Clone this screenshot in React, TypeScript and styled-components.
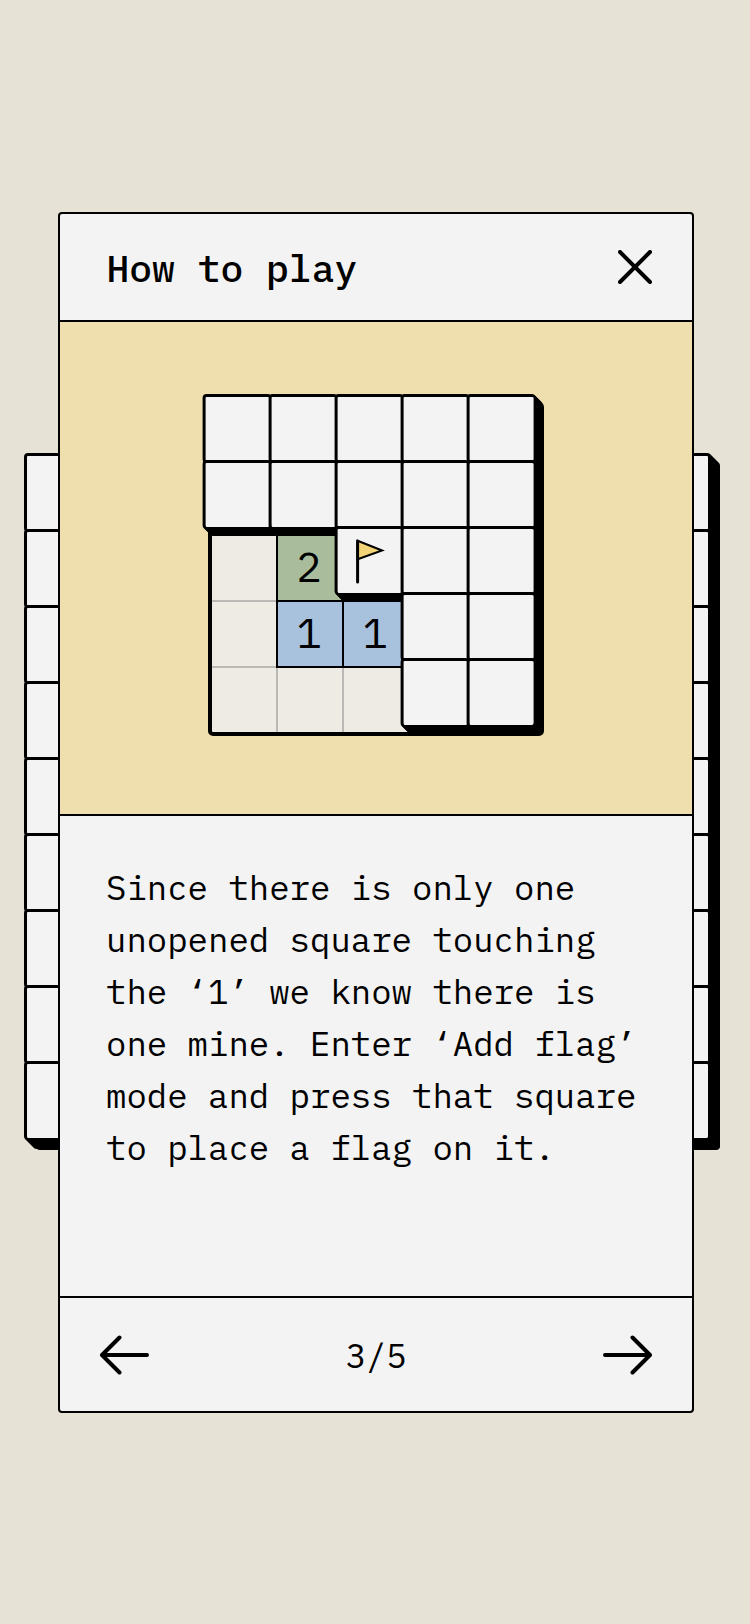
import React from "react";
import styled, { createGlobalStyle, css } from "styled-components";

const INK = "#000";
const PAPER = "#f3f3f3";

const extrude = (depth: number) =>
  Array.from({ length: depth }, (_, i) => `${i + 1}px ${i + 1}px 0 ${INK}`).join(", ");

const GlobalStyle = createGlobalStyle`
  * { box-sizing: border-box; }
  body {
    margin: 0;
    background: #e6e2d6;
    color: ${INK};
    font-family: "IBM Plex Mono", "Liberation Mono", monospace;
  }
  button { all: unset; display: flex; cursor: pointer; }
`;

const Screen = styled.main`
  display: grid;
  width: 750px;
  height: 1624px;
  overflow: hidden;
`;

const GameBoard = styled.div`
  grid-area: 1 / 1;
  display: grid;
  grid-template-columns: repeat(9, 76px);
  grid-template-rows: repeat(9, 76px);
  align-self: start;
  justify-self: start;
  margin: 453px 0 0 24px;
  border-radius: 4px;
  box-shadow: 12px 13px 0 ${INK};
`;

const GameTile = styled.div`
  width: 79px;
  height: 79px;
  border: 3px solid ${INK};
  border-bottom-width: 2px;
  border-radius: 4px;
  background: ${PAPER};
  box-shadow: ${extrude(9)};
`;

const Modal = styled.section`
  grid-area: 1 / 1;
  align-self: start;
  z-index: 1;
  display: flex;
  flex-direction: column;
  width: 636px;
  height: 1201px;
  margin: 212px 0 0 58px;
  border: 2px solid ${INK};
  border-radius: 4px;
  background: ${PAPER};
`;

const Header = styled.header`
  display: flex;
  align-items: center;
  justify-content: space-between;
  height: 108px;
  flex: none;
  border-bottom: 2px solid ${INK};
  padding: 0 40px 0 46.500px;
`;

const Title = styled.h1`
  margin: 1px 0 0;
  font-size: 38px;
  font-weight: 500;
  line-height: 50px;
`;

const Illustration = styled.div`
  display: flex;
  flex: none;
  height: 494px;
  padding: 72px 0 0 143px;
  border-bottom: 2px solid ${INK};
  background: #f0dfae;
`;

const Demo = styled.div`
  display: grid;
  width: 341px;
  height: 342px;
`;

const OpenFrame = styled.div`
  grid-area: 1 / 1;
  width: 336px;
  height: 334px;
  margin: 8px 0 0 5px;
  overflow: hidden;
  border: 4px solid ${INK};
  border-radius: 5px;
  background: #eeebe4;
`;

const OpenGrid = styled.div`
  display: grid;
  grid-template-columns: repeat(5, 66px);
  grid-template-rows: repeat(5, 66px);
  margin: -4px 0 0 -2px;
`;

const tints: Record<number, string> = { 1: "#a8c1dd", 2: "#a9bd9c" };

const OpenCell = styled.div<{ $count: number }>`
  display: flex;
  align-items: center;
  justify-content: center;
  width: 68px;
  height: 68px;
  padding: 0 2px 2px 0;
  border: 2px solid #bbb9b5;
  font-size: 42px;
  line-height: 60px;
  ${({ $count }) =>
    $count > 0 &&
    css`
      z-index: 1;
      border-color: ${INK};
      background: ${tints[$count]};
    `}
`;

const TileGrid = styled.div`
  grid-area: 1 / 1;
  z-index: 1;
  display: grid;
  grid-template-columns: repeat(5, 66px);
  grid-template-rows: repeat(5, 66px);
  transform: translateX(-0.4px);
`;

const Tile = styled.div<{ $row: number; $col: number }>`
  grid-row: ${({ $row }) => $row};
  grid-column: ${({ $col }) => $col};
  width: 69px;
  height: 69px;
  border: solid ${INK};
  border-width: 3px 2px 2px 3px;
  border-radius: 4px;
  background: ${PAPER};
  box-shadow: ${extrude(7)};
`;

const Copy = styled.p`
  flex: 1;
  margin: 0;
  padding: 45px 0 0 46px;
  font-size: 34px;
  line-height: 52px;
  white-space: pre-line;
`;

const Footer = styled.footer`
  display: flex;
  align-items: center;
  justify-content: space-between;
  height: 115px;
  flex: none;
  border-top: 2px solid ${INK};
  padding: 1px 39px 0;
`;

const Page = styled.span`
  font-size: 34px;
  line-height: 52px;
`;

const Icon = styled.svg`
  display: block;
  fill: none;
  stroke: ${INK};
  stroke-width: 4;
  stroke-linecap: round;
  stroke-linejoin: round;
`;

const Flag = () => (
  <svg width="64" height="64" viewBox="0 0 64 64">
    <path d="M20 11.800 44.500 21.500 20 30.300Z" fill="#f3d377" stroke={INK} strokeWidth="2" />
    <path d="M20 12V53" stroke={INK} strokeWidth="3" strokeLinecap="round" />
  </svg>
);

// "#" is an unopened square, "F" a flagged one, digits are opened squares.
const demo = ["#####", "#####", "02F##", "011##", "000##"];

const copy = `Since there is only one
unopened square touching
the ‘1’ we know there is
one mine. Enter ‘Add flag’
mode and press that square
to place a flag on it.`;

export default function App() {
  return (
    <>
      <GlobalStyle />
      <Screen>
        <GameBoard>
          {Array.from({ length: 81 }, (_, i) => (
            <GameTile key={i} />
          ))}
        </GameBoard>
        <Modal>
          <Header>
            <Title>How to play</Title>
            <button aria-label="Close">
              <Icon width="34" height="34" viewBox="0 0 34 34">
                <path d="M2 2 32 32M32 2 2 32" />
              </Icon>
            </button>
          </Header>
          <Illustration>
            <Demo>
              <OpenFrame>
                <OpenGrid>
                  {demo.flatMap((row, r) =>
                    [...row].map((mark, c) => {
                      const count = Number(mark) || 0;
                      return (
                        <OpenCell key={`${r}-${c}`} $count={count}>
                          {count > 0 && count}
                        </OpenCell>
                      );
                    })
                  )}
                </OpenGrid>
              </OpenFrame>
              <TileGrid>
                {demo.flatMap((row, r) =>
                  [...row].map((mark, c) =>
                    mark === "#" || mark === "F" ? (
                      <Tile key={`${r}-${c}`} $row={r + 1} $col={c + 1}>
                        {mark === "F" && <Flag />}
                      </Tile>
                    ) : null
                  )
                )}
              </TileGrid>
            </Demo>
          </Illustration>
          <Copy>{copy}</Copy>
          <Footer>
            <button aria-label="Previous">
              <Icon width="50" height="40" viewBox="0 0 50 40">
                <path d="M48 20H3.500M20.500 2.500 3 20l17.500 17.500" />
              </Icon>
            </button>
            <Page>3/5</Page>
            <button aria-label="Next">
              <Icon width="50" height="40" viewBox="0 0 50 40">
                <path d="M2 20H46.500M29.500 2.500 47 20 29.500 37.500" />
              </Icon>
            </button>
          </Footer>
        </Modal>
      </Screen>
    </>
  );
}
